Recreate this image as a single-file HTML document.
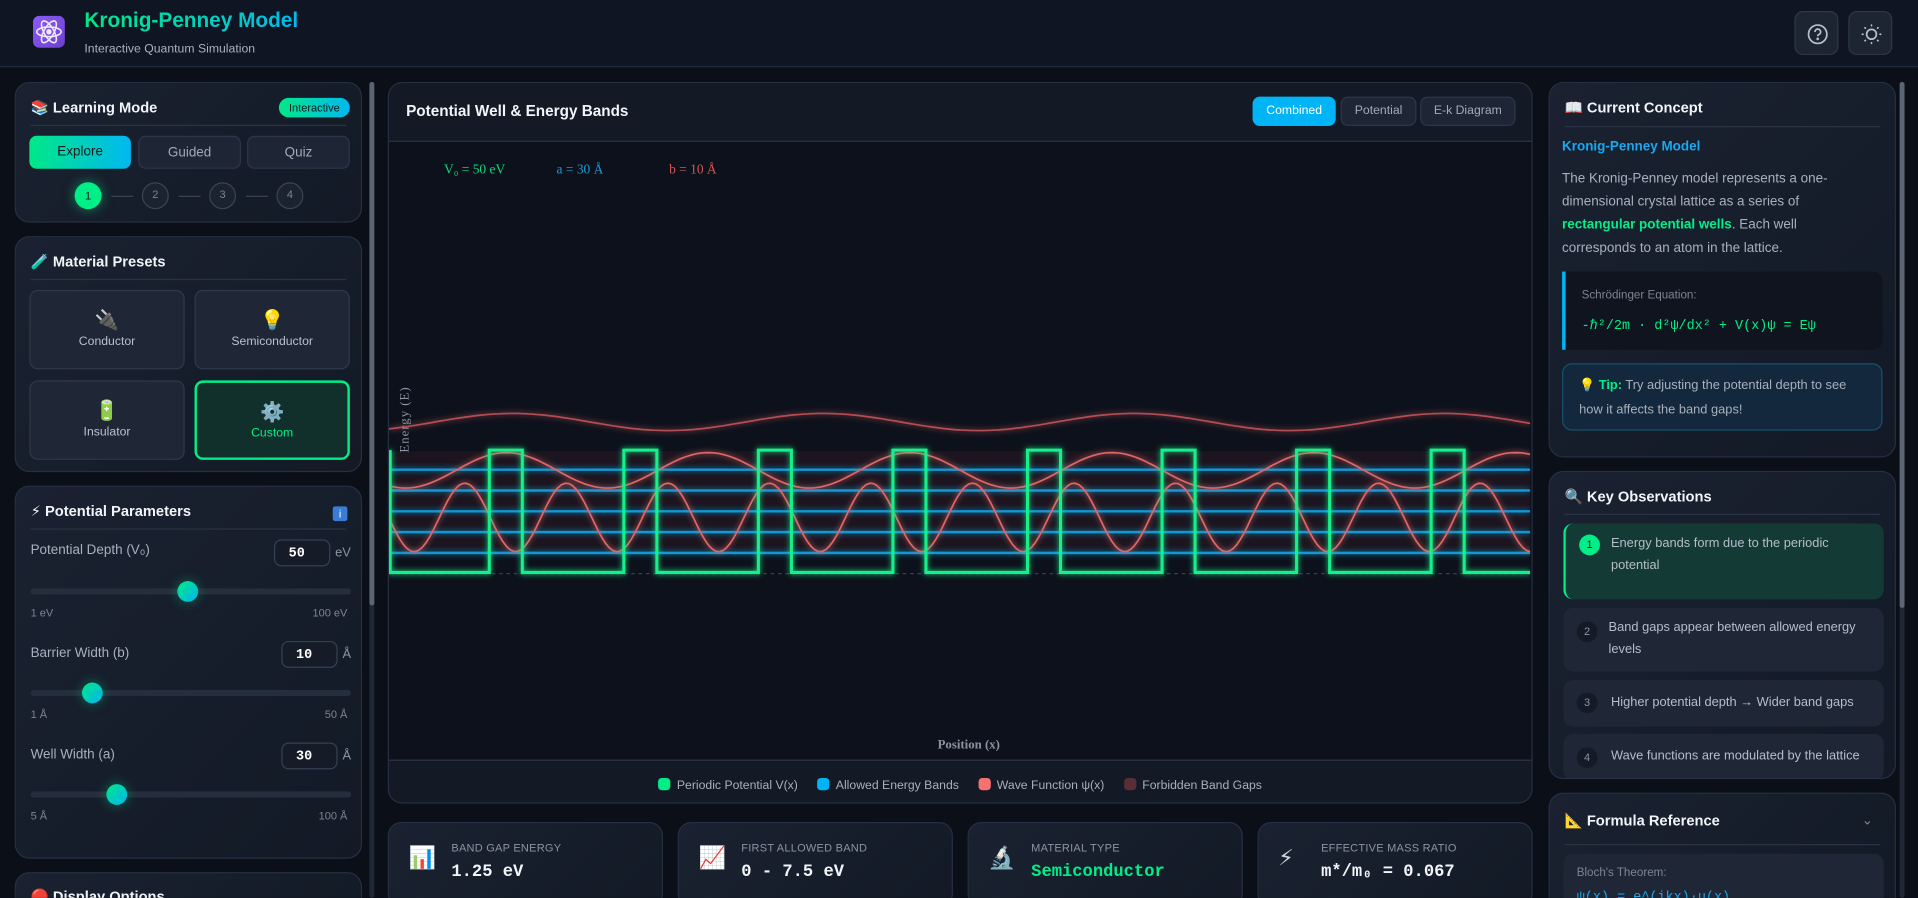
<!DOCTYPE html>
<html><head><meta charset="utf-8">
<style>
*{box-sizing:border-box;margin:0;padding:0}
html,body{width:1918px;height:898px;overflow:hidden;background:#0b0f18}
#root{position:absolute;left:0;top:0;width:1568px;height:734px;transform:scale(1.22321);transform-origin:0 0;font-family:"Liberation Sans","DejaVu Sans",sans-serif;color:#cbd5e1;background:#0b0f18;overflow:hidden}
.abs{position:absolute}
.hdr{left:0;top:0;width:1568px;height:55px;background:#0f1522;border-bottom:1px solid #222b3a}
.card{position:absolute;background:linear-gradient(135deg,#1a2130,#131a26);border:1px solid #263042;border-radius:12px;overflow:hidden}
.ct{position:absolute;left:12px;top:13px;font-size:12px;font-weight:bold;color:#f1f5f9}
.hr{position:absolute;left:12px;right:12px;height:1px;background:#2a3445}
.btn{position:absolute;border:1px solid #2d3748;background:#1e2636;border-radius:6px;font-size:11px;color:#a0aab8;text-align:center}
.pre{position:absolute;width:127px;height:65px;background:#1f2736;border:1.5px solid #2f394a;border-radius:7px;text-align:center;font-size:10px;color:#b8c0cc}
.pre .ic{font-size:16px;margin-top:14px;height:22px}
.lbl{position:absolute;left:12px;font-size:11px;color:#a8b0bd}
.inp{position:absolute;width:46px;height:22px;border:1px solid #344054;border-radius:6px;background:#151c28;font-family:"Liberation Mono",monospace;font-size:11px;font-weight:bold;color:#fff;padding:5px 0 0 11px}
.unit{position:absolute;font-size:10.5px;color:#8a94a3}
.track{position:absolute;left:12px;width:262px;height:5px;border-radius:3px;background:#252e3d}
.thumb{position:absolute;width:17px;height:17px;border-radius:50%;background:linear-gradient(135deg,#00e887,#00b4f0);box-shadow:0 0 10px rgba(0,230,140,.4)}
.mm{position:absolute;font-size:9px;color:#7b8593}
.stat{position:absolute;top:672px;width:225px;height:70px;background:linear-gradient(135deg,#1a2130,#131a26);border:1px solid #263042;border-radius:11px}
.stat .i{position:absolute;left:16px;top:18px;font-size:18px}
.stat .l{position:absolute;left:51px;top:15px;font-size:9px;color:#8a94a3;letter-spacing:.2px}
.stat .v{position:absolute;left:51px;top:32px;font-family:"Liberation Mono",monospace;font-weight:bold;font-size:14px;color:#f1f5f9}
.obs{position:absolute;left:11px;width:262px;background:#1f2736;border-radius:8px;font-size:10.5px;color:#b4bdc9;line-height:18px}
.obs .n{position:absolute;left:11px;width:17px;height:17px;border-radius:50%;background:#141b27;color:#8a94a3;font-size:9px;text-align:center;line-height:17px}
.obs .t{position:absolute;left:37px;right:8px}
.leg{display:inline-block;font-size:10px;color:#a8b0bd;margin:0 8px}
.leg i{display:inline-block;width:10px;height:10px;border-radius:3px;vertical-align:-1px;margin-right:5px}
.stp{position:absolute;top:81px;width:22px;height:22px;border-radius:50%;border:1.5px solid #3a4454;background:#1b2230;font-size:9px;color:#7b8593;text-align:center;line-height:19px}
.sl{position:absolute;top:92px;width:18px;height:1px;background:#3a4454}
</style></head><body><div id="root">

<div class="abs hdr">
  <div class="abs" style="left:27px;top:13px;width:26px;height:26px;border-radius:5px;background:linear-gradient(135deg,#8b5cf6,#6d3fd0)">
    <svg width="26" height="26" viewBox="0 0 26 26" fill="none" stroke="#f0e8ff" stroke-width="1.3"><ellipse cx="13" cy="13" rx="10" ry="4"/><ellipse cx="13" cy="13" rx="10" ry="4" transform="rotate(60 13 13)"/><ellipse cx="13" cy="13" rx="10" ry="4" transform="rotate(-60 13 13)"/><circle cx="13" cy="13" r="1.6" fill="#f0e8ff"/></svg>
  </div>
  <div class="abs" style="left:69px;top:7px;font-size:17px;font-weight:bold;background:linear-gradient(90deg,#00e887,#00d0c0 60%,#00b8f0);-webkit-background-clip:text;color:transparent">Kronig-Penney Model</div>
  <div class="abs" style="left:69px;top:35px;font-size:10px;color:#a8b0bd">Interactive Quantum Simulation</div>
  <div class="abs" style="left:1467px;top:9px;width:36px;height:36px;border-radius:7px;background:#1d2533;border:1px solid #2d3748"><svg width="36" height="36" viewBox="0 0 36 36" fill="none" stroke="#b8c0cc" stroke-width="1.4"><circle cx="18" cy="18" r="7.5"/><path d="M15.8 16.2a2.3 2.3 0 1 1 3 2.1c-.6.3-.8.7-.8 1.3"/><circle cx="18" cy="21.8" r=".4" fill="#b8c0cc"/></svg></div>
  <div class="abs" style="left:1511px;top:9px;width:36px;height:36px;border-radius:7px;background:#1d2533;border:1px solid #2d3748"><svg width="36" height="36" viewBox="0 0 36 36" fill="none" stroke="#b8c0cc" stroke-width="1.4" stroke-linecap="round"><circle cx="18" cy="18" r="4"/><path d="M18 10.5v.5M18 25v.5M10.5 18h.5M25 18h.5M12.7 12.7l.3.3M23 23l.3.3M12.7 23.3l.3-.3M23 13l.3-.3"/></svg></div>
</div>

<div class="abs" style="left:302px;top:67px;width:4px;height:667px;background:#202836;border-radius:2px"><div style="height:428px;background:#5c6573;border-radius:2px"></div></div>

<div class="card" style="left:12px;top:67px;width:284px;height:115px">
  <div class="ct">📚 Learning Mode</div>
  <div class="abs" style="left:215px;top:12px;width:58px;height:16px;border-radius:8px;background:linear-gradient(90deg,#00e887,#00b8f0);font-size:9px;color:#0b1a1a;text-align:center;line-height:16px">Interactive</div>
  <div class="hr" style="top:34px"></div>
  <div class="btn" style="left:11px;top:43px;width:83px;height:27px;line-height:26px;background:linear-gradient(90deg,#00e887,#00b8f0);border:none;color:#0b1a1a">Explore</div>
  <div class="btn" style="left:100px;top:43px;width:84px;height:27px;line-height:26px">Guided</div>
  <div class="btn" style="left:189px;top:43px;width:84px;height:27px;line-height:26px">Quiz</div>
  <div class="abs" style="left:48px;top:81px;width:22px;height:22px;border-radius:50%;background:#00ee88;box-shadow:0 0 10px rgba(0,238,136,.5);font-size:9px;color:#0b1a1a;text-align:center;line-height:22px">1</div>
  <div class="sl" style="left:78px"></div>
  <div class="stp" style="left:103px">2</div>
  <div class="sl" style="left:133px"></div>
  <div class="stp" style="left:158px">3</div>
  <div class="sl" style="left:188px"></div>
  <div class="stp" style="left:213px">4</div>
</div>

<div class="card" style="left:12px;top:193px;width:284px;height:193px">
  <div class="ct">🧪 Material Presets</div>
  <div class="hr" style="top:34px"></div>
  <div class="pre" style="left:11px;top:43px"><div class="ic">🔌</div>Conductor</div>
  <div class="pre" style="left:146px;top:43px"><div class="ic">💡</div>Semiconductor</div>
  <div class="pre" style="left:11px;top:117px"><div class="ic">🔋</div>Insulator</div>
  <div class="pre" style="left:146px;top:117px;background:#11302b;border:2px solid #00ee88;color:#00ee88"><div class="ic">⚙️</div>Custom</div>
</div>

<div class="card" style="left:12px;top:397px;width:284px;height:305px">
  <div class="ct">⚡ Potential Parameters</div>
  <div class="abs" style="left:259px;top:16px;width:12px;height:12px;background:#3a7bd5;border-radius:2px;font-size:9px;color:#fff;text-align:center;line-height:12px">i</div>
  <div class="hr" style="top:34px"></div>
  <div class="lbl" style="top:46px">Potential Depth (V₀)</div>
  <div class="inp" style="left:211px;top:43px">50</div><div class="unit" style="left:261px;top:48px">eV</div>
  <div class="track" style="top:83px"></div><div class="thumb" style="left:132px;top:77px"></div>
  <div class="mm" style="left:12px;top:98px">1 eV</div><div class="mm" style="right:11px;top:98px">100 eV</div>
  <div class="lbl" style="top:130px">Barrier Width (b)</div>
  <div class="inp" style="left:217px;top:126px">10</div><div class="unit" style="left:267px;top:131px">Å</div>
  <div class="track" style="top:166px"></div><div class="thumb" style="left:54px;top:160px"></div>
  <div class="mm" style="left:12px;top:181px">1 Å</div><div class="mm" style="right:11px;top:181px">50 Å</div>
  <div class="lbl" style="top:213px">Well Width (a)</div>
  <div class="inp" style="left:217px;top:209px">30</div><div class="unit" style="left:267px;top:214px">Å</div>
  <div class="track" style="top:249px"></div><div class="thumb" style="left:74px;top:243px"></div>
  <div class="mm" style="left:12px;top:264px">5 Å</div><div class="mm" style="right:11px;top:264px">100 Å</div>
</div>

<div class="card" style="left:12px;top:713px;width:284px;height:60px">
  <div class="ct" style="top:12px">🔴 Display Options</div>
</div>

<div class="card" style="left:317px;top:67px;width:936px;height:590px;background:#131925">
  <div class="abs" style="left:14px;top:16px;font-size:12.5px;font-weight:bold;color:#f1f5f9">Potential Well &amp; Energy Bands</div>
  <div class="btn" style="left:706px;top:11px;width:68px;height:24px;line-height:23px;background:#00b4f5;border:none;color:#fff;font-size:10px">Combined</div>
  <div class="btn" style="left:778px;top:11px;width:62px;height:24px;line-height:22px;font-size:10px">Potential</div>
  <div class="btn" style="left:843px;top:11px;width:78px;height:24px;line-height:22px;font-size:10px">E-k Diagram</div>
  <div class="abs" style="left:0;top:47px;width:934px;height:1px;background:#2a3445"></div>
  <div class="abs" style="left:0;top:48px;width:934px;height:505px;background:#0d111b"></div>
  <div class="abs" style="left:0;top:553px;width:934px;height:1px;background:#2a3445"></div>
  <div class="abs" style="left:0;top:564px;width:934px;text-align:center"><span class="leg"><i style="background:#00ee88"></i>Periodic Potential V(x)</span><span class="leg"><i style="background:#00b4f5"></i>Allowed Energy Bands</span><span class="leg"><i style="background:#f87171"></i>Wave Function ψ(x)</span><span class="leg"><i style="background:#5a2e35"></i>Forbidden Band Gaps</span></div>
</div>
<svg class="abs" style="left:318px;top:115px" width="933" height="505" viewBox="0 0 933 505">
  <defs><filter id="g" x="-5%" y="-20%" width="110%" height="140%"><feGaussianBlur stdDeviation="2.5" result="b"/><feMerge><feMergeNode in="b"/><feMergeNode in="SourceGraphic"/></feMerge></filter></defs>
  <g fill="#3a1f28" opacity=".35"><rect x="0" y="254" width="933" height="13"/><rect x="0" y="271" width="933" height="13"/><rect x="0" y="288" width="933" height="13"/><rect x="0" y="305" width="933" height="13"/><rect x="0" y="322" width="933" height="13"/></g>
  <line x1="0" y1="354" x2="933" y2="354" stroke="#3a4454" stroke-dasharray="3 3"/>
  <g stroke="#12a6e6" stroke-width="2" filter="url(#g)" opacity=".9"><line x1="0" y1="269" x2="933" y2="269"/><line x1="0" y1="286" x2="933" y2="286"/><line x1="0" y1="303" x2="933" y2="303"/><line x1="0" y1="320" x2="933" y2="320"/><line x1="0" y1="337" x2="933" y2="337"/></g>
  <g fill="none" stroke="#e06666" stroke-width="1.4" filter="url(#g)">
    <path id="w1" stroke="#b44e55" d=""/><path id="w2" d=""/><path id="w3" d=""/>
  </g>
  <path id="pot" fill="none" stroke="#16f08a" stroke-width="2.5" filter="url(#g)" d=""/>
  <g font-family="Liberation Serif,serif" font-size="11"><text x="45" y="27" fill="#12d67e">V₀ = 50 eV</text><text x="137" y="27" fill="#1a9bd6">a = 30 Å</text><text x="229" y="27" fill="#d05a5a">b = 10 Å</text></g>
  <text transform="translate(16 255) rotate(-90)" font-family="Liberation Serif,serif" font-size="10.5" letter-spacing="0.8" fill="#8a94a3">Energy (E)</text>
  <text x="474" y="497" text-anchor="middle" font-family="Liberation Serif,serif" font-size="10.5" font-weight="bold" fill="#8a94a3">Position (x)</text>
</svg>

<div class="stat" style="left:317px"><div class="i">📊</div><div class="l">BAND GAP ENERGY</div><div class="v">1.25 eV</div></div>
<div class="stat" style="left:554px"><div class="i">📈</div><div class="l">FIRST ALLOWED BAND</div><div class="v">0 - 7.5 eV</div></div>
<div class="stat" style="left:791px"><div class="i">🔬</div><div class="l">MATERIAL TYPE</div><div class="v" style="color:#00ee88">Semiconductor</div></div>
<div class="stat" style="left:1028px"><div class="i">⚡</div><div class="l">EFFECTIVE MASS RATIO</div><div class="v">m*/m₀ = 0.067</div></div>

<div class="abs" style="left:1553px;top:67px;width:4px;height:667px;background:#202836;border-radius:2px"><div style="height:430px;background:#5c6573;border-radius:2px"></div></div>

<div class="card" style="left:1266px;top:67px;width:284px;height:307px">
  <div class="ct">📖 Current Concept</div>
  <div class="hr" style="top:35px"></div>
  <div class="abs" style="left:10px;top:46px;font-size:11px;font-weight:bold;color:#1aa8f0">Kronig-Penney Model</div>
  <div class="abs" style="left:10px;top:69px;width:232px;font-size:11px;line-height:19px;color:#a8b0bd">The Kronig-Penney model represents a one-dimensional crystal lattice as a series of <b style="color:#00ee88">rectangular potential wells</b>. Each well corresponds to an atom in the lattice.</div>
  <div class="abs" style="left:10px;top:154px;width:262px;height:64px;background:#0f141f;border-left:3px solid #00b4f5;border-radius:0 8px 8px 0">
    <div class="abs" style="left:13px;top:14px;font-size:9.5px;color:#7b8593">Schrödinger Equation:</div>
    <div class="abs" style="left:13px;top:37px;font-family:'Liberation Mono',monospace;font-size:11px;color:#00ee88;white-space:nowrap">-ℏ²/2m · d²ψ/dx² + V(x)ψ = Eψ</div>
  </div>
  <div class="abs" style="left:10px;top:229px;width:262px;height:55px;background:#13283c;border:1px solid #17506e;border-radius:8px;font-size:10.5px;line-height:20px;color:#a8b0bd;padding:7px 13px">💡 <b style="color:#00ee88">Tip:</b> Try adjusting the potential depth to see how it affects the band gaps!</div>
</div>

<div class="card" style="left:1266px;top:385px;width:284px;height:252px">
  <div class="ct">🔍 Key Observations</div>
  <div class="hr" style="top:34px"></div>
  <div class="obs" style="top:42px;height:62px;background:#143a35;border-left:2px solid #00ee88"><div class="n" style="top:9px;background:#00ee88;color:#0b1a1a">1</div><div class="t" style="top:7px">Energy bands form due to the periodic potential</div></div>
  <div class="obs" style="top:111px;height:52px"><div class="n" style="top:11px">2</div><div class="t" style="top:7px">Band gaps appear between allowed energy levels</div></div>
  <div class="obs" style="top:170px;height:38px"><div class="n" style="top:10px">3</div><div class="t" style="top:9px;left:39px">Higher potential depth → Wider band gaps</div></div>
  <div class="obs" style="top:214px;height:38px"><div class="n" style="top:11px">4</div><div class="t" style="top:9px;left:39px">Wave functions are modulated by the lattice</div></div>
</div>

<div class="card" style="left:1266px;top:648px;width:284px;height:100px">
  <div class="ct" style="top:15px">📐 Formula Reference</div>
  <div class="abs" style="left:255px;top:15px;font-size:11px;color:#7b8593">⌄</div>
  <div class="hr" style="top:41px"></div>
  <div class="abs" style="left:11px;top:49px;width:262px;height:60px;background:#1f2736;border-radius:8px"><div class="abs" style="left:11px;top:10px;font-size:9.5px;color:#7b8593">Bloch's Theorem:</div><div class="abs" style="left:11px;top:30px;font-family:'Liberation Mono',monospace;font-size:11px;color:#1aa8f0">ψ(x) = e^(ikx)·u(x)</div></div>
</div>

</div>
<script>
(function(){
 var W=933,d,x;
 function wave(c,a,p,ph){var s='';for(x=0;x<=W;x+=3){var y=c-a*Math.cos(2*Math.PI*(x-ph)/p);s+=(x?'L':'M')+x+' '+y.toFixed(1);}return s;}
 document.getElementById('w1').setAttribute('d',wave(230,7,254,101));
 document.getElementById('w2').setAttribute('d',wave(269.5,14.5,165,96));
 document.getElementById('w3').setAttribute('d',wave(308,28,83,62));
 d='M1 253L1 353';
 for(var k=0;k<8;k++){var a=82+110*k;d+='L'+a+' 353L'+a+' 253L'+(a+27)+' 253L'+(a+27)+' 353';}
 d+='L933 353';
 document.getElementById('pot').setAttribute('d',d);
})();
</script>
</body></html>
